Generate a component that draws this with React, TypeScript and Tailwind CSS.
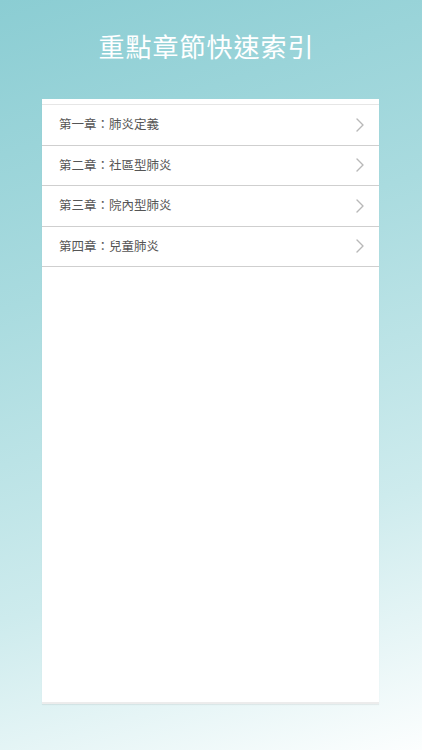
import React from 'react';
import { ChevronRight } from 'lucide-react';

const chapters = ['第一章：肺炎定義', '第二章：社區型肺炎', '第三章：院內型肺炎', '第四章：兒童肺炎'];

const App: React.FC = () => {
  return (
    <div
      className="w-[422px] h-[750px] overflow-hidden flex flex-col bg-[linear-gradient(162deg,#8bcdd3_0%,#a9dbdf_35%,#cdebed_70%,#fcfefe_100%)]"
      style={{ fontFamily: '"Noto Sans CJK TC", "Noto Sans", sans-serif' }}
    >
      <h1 className="h-[99px] flex items-center justify-center pb-[8px] pr-[9px] text-white text-[26px] tracking-[1px] font-normal">
        重點章節快速索引
      </h1>

      <div className="mx-[42px] w-[337px] h-[605px] bg-white flex flex-col shadow-[0_1px_1px_rgba(0,0,0,0.06)]">
        <div className="h-[6px] border-b border-[#e6e6e6]" />
        {chapters.map((c, i) => (
          <div key={i} className="h-[40.5px] flex items-center justify-between pl-[17px] pr-[7px] border-b border-[#cfcfcf]">
            <span className="text-[12.5px] text-[#555555]">{c}</span>
            <ChevronRight size={24} strokeWidth={1.4} className="text-[#b8b8b8]" />
          </div>
        ))}
        <div className="flex-1" />
        <div className="h-[2px] bg-[#ececec]" />
      </div>
    </div>
  );
};

export default App;
